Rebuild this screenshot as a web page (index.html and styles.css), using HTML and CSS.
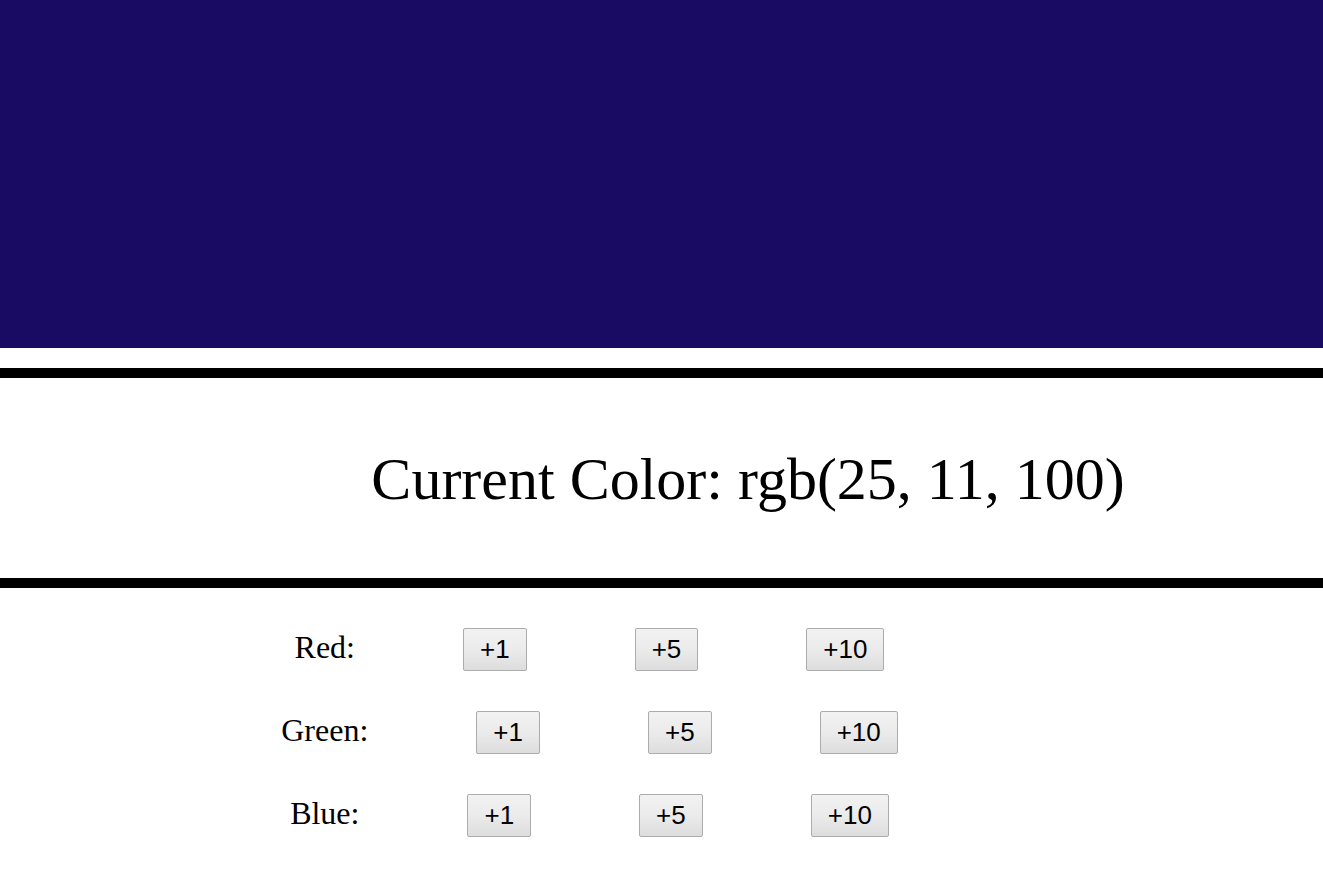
FILE: index.html
```html
<!DOCTYPE html>
<html>
<head>
<meta charset="utf-8">
<title>Color Mixer</title>
<link rel="stylesheet" href="styles.css">
</head>
<body>
<div class="swatch"></div>
<div class="readout">
  <h1 class="readout-text">Current Color: rgb(25, 11, 100)</h1>
</div>
<div class="controls">
  <div class="control-row">
    <span class="channel">Red:</span>
    <button class="step">+1</button>
    <button class="step">+5</button>
    <button class="step">+10</button>
  </div>
  <div class="control-row">
    <span class="channel">Green:</span>
    <button class="step">+1</button>
    <button class="step">+5</button>
    <button class="step">+10</button>
  </div>
  <div class="control-row">
    <span class="channel">Blue:</span>
    <button class="step">+1</button>
    <button class="step">+5</button>
    <button class="step">+10</button>
  </div>
</div>
</body>
</html>
```

FILE: styles.css
```css
html, body {
  margin: 0;
  padding: 0;
  background: #ffffff;
}

body {
  font-family: "Liberation Serif", "Times New Roman", serif;
  color: #000000;
}

.swatch {
  height: 348px;
  background: rgb(25, 11, 100);
  margin-bottom: 20px;
}

.readout {
  border-top: 10px solid #000000;
  border-bottom: 10px solid #000000;
  height: 200px;
  display: flex;
  align-items: center;
  justify-content: center;
  padding-left: 173px;
}

.readout-text {
  margin: 0;
  font-weight: normal;
  font-size: 60px;
  text-align: center;
  position: relative;
  top: 1px;
}

.controls {
  display: flex;
  flex-direction: column;
  gap: 40px;
  padding-top: 40px;
}

.control-row {
  display: flex;
  justify-content: center;
  align-items: baseline;
  gap: 108px;
  padding-right: 144px;
}

.channel {
  font-size: 32px;
}

.step {
  font-family: "Liberation Sans", Arial, sans-serif;
  font-size: 26px;
  color: #000000;
  padding: 5px 16px;
  margin: 0;
  border: 1px solid #acacac;
  border-radius: 2px;
  background: linear-gradient(to bottom, #f2f2f2 0%, #ebebeb 50%, #dddddd 100%);
  line-height: normal;
}
```
